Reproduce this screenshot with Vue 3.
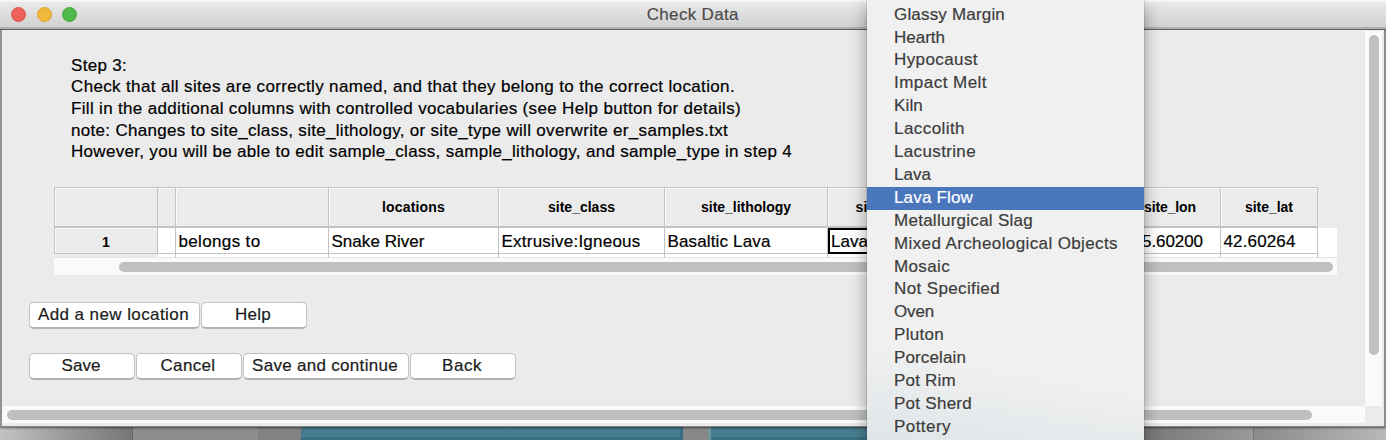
<script setup>
const notes = [
  { text: 'Step 3:', w: 56 },
  { text: 'Check that all sites are correctly named, and that they belong to the correct location.', w: 664 },
  { text: 'Fill in the additional columns with controlled vocabularies (see Help button for details)', w: 670 },
  { text: 'note: Changes to site_class, site_lithology, or site_type will overwrite er_samples.txt', w: 657 },
  { text: 'However, you will be able to edit sample_class, sample_lithology, and sample_type in step 4', w: 721 }
]

const columns = [
  { head: '', value: '', cls: 'sliver' },
  { head: '', value: 'belongs to', w: 82, cls: 'belongs' },
  { head: 'locations', hw: 63, value: 'Snake River', w: 93, cls: 'locations' },
  { head: 'site_class', hw: 67, value: 'Extrusive:Igneous', w: 139, cls: 'class' },
  { head: 'site_lithology', hw: 90, value: 'Basaltic Lava', w: 103, cls: 'lithology' },
  { head: 'site_type', hw: 62, value: 'Lava', w: 37, cls: 'type' },
  { head: 'site_lon', hw: 52, value: '-115.60200', w: 84, cls: 'lon' },
  { head: 'site_lat', hw: 48, value: '42.60264', w: 72, cls: 'lat' }
]

const options = [
  ['Glassy Margin', 111], ['Hearth', 51], ['Hypocaust', 84], ['Impact Melt', 93],
  ['Kiln', 29], ['Laccolith', 71], ['Lacustrine', 82], ['Lava', 37], ['Lava Flow', 79],
  ['Metallurgical Slag', 139], ['Mixed Archeological Objects', 224], ['Mosaic', 56],
  ['Not Specified', 106], ['Oven', 40], ['Pluton', 50], ['Porcelain', 72],
  ['Pot Rim', 62], ['Pot Sherd', 78], ['Pottery', 57]
]

// Spreads a label's letters so that it occupies its nominal width.
const vTrack = (el, { value }) => {
  if (!value || el.dataset.tracked) return
  el.dataset.tracked = '1'
  const extra = value - el.getBoundingClientRect().width
  el.style.letterSpacing = `${extra / el.textContent.length}px`
}
</script>

<template>
  <div class="screen">
    <div class="desktop">
      <span class="pane first"></span><span class="pane second"></span><span class="pane third"></span>
      <span class="pane blue one"></span><span class="pane gap"></span><span class="pane blue two"></span>
      <span class="pane grey"></span><span class="pane last"></span>
    </div>
    <div class="window">
      <header class="titlebar">
        <i class="light red"></i><i class="light yellow"></i><i class="light green"></i>
        <h1><span v-track="92">Check Data</span></h1>
      </header>
      <main class="body">
        <section class="content">
          <div class="notes">
            <p v-for="n in notes" :key="n.text"><span v-track="n.w">{{ n.text }}</span></p>
          </div>
          <div class="grid">
            <div class="cells">
              <div class="col rownum"><div class="head"></div><div class="cell"><span>1</span></div><div class="tail"></div></div>
              <div v-for="c in columns" :key="c.cls" class="col" :class="c.cls">
                <div class="head"><span v-track="c.hw">{{ c.head }}</span></div>
                <div class="cell"><span v-track="c.w">{{ c.value }}</span></div>
                <div class="tail"></div>
              </div>
              <div class="rest"></div>
            </div>
            <div class="track"><div class="thumb"></div></div>
          </div>
          <div class="buttons top">
            <button class="wide"><span v-track="151">Add a new location</span></button>
            <button><span v-track="36">Help</span></button>
          </div>
          <div class="buttons">
            <button><span v-track="39">Save</span></button>
            <button><span v-track="55">Cancel</span></button>
            <button class="cont"><span v-track="146">Save and continue</span></button>
            <button><span v-track="40">Back</span></button>
          </div>
        </section>
        <div class="vtrack"><div class="vthumb"></div></div>
        <div class="htrack"><div class="hthumb"></div></div>
      </main>
    </div>
    <ul class="menu">
      <li v-for="[label, w] in options" :key="label" :class="{ selected: label === 'Lava Flow' }">
        <span v-track="w">{{ label }}</span>
      </li>
    </ul>
  </div>
</template>

<style>
body { margin: 0; overflow: hidden; }
</style>

<style scoped>
* { box-sizing: border-box; }
.screen {
  position: relative; width: 1386px; height: 440px; overflow: hidden;
  background: #8e8e8e; color: #000;
  font: 17px/22px "Liberation Sans", Arial, sans-serif; white-space: nowrap;
  -webkit-text-stroke-width: .2px;
}
.desktop { position: absolute; left: 0; right: 0; bottom: 0; height: 14px; display: flex; }
.pane { height: 100%; flex: none; }
.first { width: 133px; background: linear-gradient(90deg, #c2c2c2, #8b8b8b 70%, #777); border-right: 1px solid #666; }
.second { width: 125px; background: #8d8d8d; }
.third { width: 43px; background: #828282; }
.blue { background: linear-gradient(#48798a 0, #4b7f92 11px, #38707f 11px); border-right: 3px solid #376c80; }
.one { width: 382px; }
.gap { width: 25px; background: #878787; }
.two { width: 250px; border-left: 3px solid #6e9695; }
.grey { width: 296px; background: linear-gradient(90deg, #777 63%, #999); border-right: 1px solid #777; }
.last { flex: 1; background: linear-gradient(90deg, #8a8a8a, #b8b8b8); }

.window { position: relative; height: 427px; background: #ebebeb; border-bottom: 1px solid #858585; box-shadow: 0 1px 2px rgba(0, 0, 0, .5); }
.titlebar {
  height: 30px; display: flex; align-items: center; position: relative; padding-left: 11px; gap: 10px;
  background: linear-gradient(#f6f6f6 0, #f6f6f6 2px, #e9e9e9 2px, #d2d2d2 27px, #b0b0b0 27px, #b0b0b0 29px, #626262 29px);
}
.light { width: 15px; height: 15px; border-radius: 50%; border: 1px solid; margin-right: .5px; flex: none; margin-top: -1px; }
.red { background: #ed6158; border-color: #d9534c; }
.yellow { background: #f1b93b; border-color: #dca031; }
.green { background: #51b949; border-color: #43a63b; }
h1 { flex: 1; margin: 0 0 0 -88px; text-align: center; font: inherit; color: #4b4b4b; }

.body {
  height: 396px; display: grid; grid-template-columns: 1fr 17px; grid-template-rows: 376px 17px;
  border-left: 2px solid #929292; border-right: 2px solid #8b8b8b; padding-right: 2px;
}
.content { padding: 24px 0 0 27px; }
.notes { padding: .6px 0 0 42px; line-height: 21.7px; height: 133px; }
.notes p { margin: 0; }

.grid { margin-left: 25px; width: 1283px; }
.cells { display: flex; height: 71px; padding-left: 1px; background: linear-gradient(90deg, #c3c3c3 1px, transparent 1px); background-size: 100% 67px; background-repeat: no-repeat; }
.col { flex: none; }
.head {
  height: 41px; display: flex; align-items: center; justify-content: center; font: bold 14px/18px "Liberation Sans", Arial, sans-serif;
  -webkit-text-stroke-width: 0;
  border: solid #c3c3c3; border-width: 1px 1px 2px 0; box-shadow: inset 1px 1px #fafafa; background: #ebebeb; overflow: hidden;
}
.cell { height: 26px; display: flex; align-items: center; padding: 2px 0 0 2.5px; background: #fff; border: solid #c3c3c3; border-width: 0 1px 1px 0; overflow: hidden; }
.tail { height: 4px; background: #fff; border-right: 1px solid #c3c3c3; border-bottom: 1px solid #e6e6e6; }
.rownum { width: 103px; }
.rownum .cell { justify-content: center; background: #ebebeb; font-weight: bold; font-size: 14px; box-shadow: inset 1px 1px #fafafa; padding-left: 0; -webkit-text-stroke-width: 0; }
.rownum .tail { background: #ebebeb; border-right: 0; }
.sliver { width: 18px; }
.sliver .head { box-shadow: inset 0 1px #fafafa; }
.belongs { width: 153px; }
.locations { width: 170px; }
.class { width: 166px; }
.lithology { width: 163px; }
.type { width: 118px; }
.type .cell { border: 2px solid #000; padding: 1px 0 0 1px; }
.lon { width: 275px; }
.lon .cell { justify-content: flex-end; padding-right: 17px; }
.lon .head { justify-content: flex-end; padding-right: 24px; }
.lat { width: 97px; }
.rest { flex: 1; margin-top: 41px; height: 30px; background: #fff; border-bottom: 1px solid #e6e6e6; }
.track { height: 17px; background: #fafafa; padding: 4px 4px 0 65px; }
.thumb { height: 10px; border-radius: 5px; background: #c0c0c0; }

.buttons { display: flex; gap: 1px; }
.buttons.top { margin: 27px 0 24px; }
button {
  width: 106px; height: 27px; padding: 0 2px 0 0; border: 1px solid #c1c1c1; border-bottom: 2px solid #b2b2b2; border-radius: 5px;
  background: #fff; color: #1b1b1b; font: inherit; text-align: center; -webkit-text-stroke-width: .2px;
}
button.wide { width: 171px; }
button.cont { width: 166px; }

.vtrack { background: #fafafa; padding: 4px 3px 0 4px; margin-top: 1px; }
.vthumb { height: 320px; border-radius: 5px; background: #c0c0c0; }
.htrack { background: #fafafa; padding: 4px 0 0 5px; }
.hthumb { width: 1305px; height: 10px; border-radius: 5px; background: #c0c0c0; }

.menu {
  position: absolute; left: 867px; top: 0; width: 277px; height: 440px; margin: 0; padding: 3.6px 0 0; list-style: none;
  background: linear-gradient(190deg, #f0f0f0 0, #f0f0f0 80%, #dfe5e8 100%);
  color: #3c3c3c; box-shadow: 0 0 1px rgba(0, 0, 0, .55), 0 6px 16px rgba(0, 0, 0, .38);
}
.menu li { height: 22.92px; line-height: 22.92px; padding-left: 27px; }
.menu .selected { background: #4a77bc; color: #fff; }
</style>
